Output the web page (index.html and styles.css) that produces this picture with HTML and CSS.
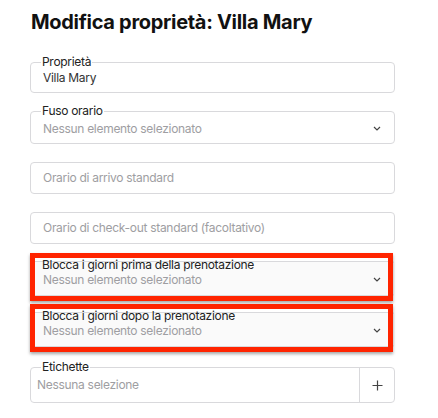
FILE: index.html
```html
<!DOCTYPE html>
<html lang="it">
<head>
<meta charset="utf-8">
<link rel="stylesheet" href="styles.css">
</head>
<body>
<main class="page">
  <h1 class="title">Modifica proprietà: Villa Mary</h1>

  <div class="field f-prop">
    <span class="legend">Proprietà</span>
    <div class="value">Villa Mary</div>
  </div>

  <div class="field f-tz select">
    <span class="legend">Fuso orario</span>
    <div class="placeholder">Nessun elemento selezionato</div>
    <svg class="chev" width="8" height="5" viewBox="0 0 8 5"><path d="M1 1l3 3 3-3" fill="none" stroke="#444" stroke-width="1.2"/></svg>
  </div>

  <div class="field f-plain f-arr">
    <div class="placeholder">Orario di arrivo standard</div>
  </div>

  <div class="field f-plain f-out">
    <div class="placeholder">Orario di check-out standard (facoltativo)</div>
  </div>

  <div class="field f-block f-b1 select">
    <span class="legend">Blocca i giorni prima della prenotazione</span>
    <div class="placeholder">Nessun elemento selezionato</div>
    <svg class="chev" width="8" height="5" viewBox="0 0 8 5"><path d="M1 1l3 3 3-3" fill="none" stroke="#444" stroke-width="1.2"/></svg>
    <div class="highlight"></div>
  </div>

  <div class="field f-block f-b2 select">
    <span class="legend">Blocca i giorni dopo la prenotazione</span>
    <div class="placeholder">Nessun elemento selezionato</div>
    <svg class="chev" width="8" height="5" viewBox="0 0 8 5"><path d="M1 1l3 3 3-3" fill="none" stroke="#444" stroke-width="1.2"/></svg>
    <div class="highlight"></div>
  </div>

  <div class="field f-tags">
    <span class="legend">Etichette</span>
    <div class="tags-row">
      <div class="placeholder tags-ph">Nessuna selezione</div>
      <div class="add">
        <svg width="11" height="11" viewBox="0 0 11 11"><path d="M5.5 0.5v10M0.5 5.5h10" stroke="#444" stroke-width="1.2"/></svg>
      </div>
    </div>
  </div>
</main>
</body>
</html>
```

FILE: styles.css
```css
* { box-sizing: border-box; }
html, body { margin: 0; padding: 0; background: #fff; }
body {
  font-family: Inter, "Noto Sans", sans-serif;
  font-size: 12px;
  color: #222;
  letter-spacing: -0.3px;
}
.page {
  width: 438px;
  padding: 8px 43px 0 30px;
}
.title {
  margin: 0 0 0 1px;
  font-size: 20px;
  line-height: 28px;
  font-weight: 700;
  color: #111;
  letter-spacing: -0.3px;
}
.field {
  position: relative;
  border: 1px solid #d9d9dc;
  border-radius: 4px;
  background: #fff;
}
.legend {
  position: absolute;
  top: -8px;
  left: 10px;
  padding: 0 1px;
  background: #fff;
  font-size: 12px;
  line-height: 14px;
  color: #222;
  white-space: nowrap;
}
.value {
  padding: 8px 12px 0;
  line-height: 14px;
  color: #333;
}
.placeholder {
  line-height: 14px;
  color: #9e9ea2;
  white-space: nowrap;
}
.f-prop { margin-top: 26px; height: 31px; }
.f-tz { margin-top: 18px; height: 33px; padding: 10px 12px 0; }
.chev { position: absolute; right: 13px; top: 14px; }
.f-plain { height: 32px; padding: 8px 12px 0; }
.f-arr { margin-top: 18px; }
.f-out { margin-top: 18px; }
.f-block {
  height: 35px;
  padding: 11px 12px 0;
  background: #fafafa;
  border-left-color: transparent;
  border-right-color: transparent;
}
.f-block .legend { background: transparent; top: -4px; }
.f-block .chev { top: 15px; }
.f-b1 { margin-top: 17px; }
.f-b2 { margin-top: 16px; }
.highlight {
  position: absolute;
  left: -1px;
  right: 1px;
  top: -9px;
  bottom: -6px;
  border: 5px solid #ff2400;
  box-shadow: 0 2px 3px rgba(0,0,0,0.35);
  pointer-events: none;
}
.f-tags { margin-top: 20px; height: 36px; }
.tags-row { display: flex; height: 100%; }
.tags-ph { flex: 1; padding: 10px 6px 0; }
.add {
  width: 35px;
  border-left: 1px solid #d9d9dc;
  display: flex;
  align-items: center;
  justify-content: center;
}
```
